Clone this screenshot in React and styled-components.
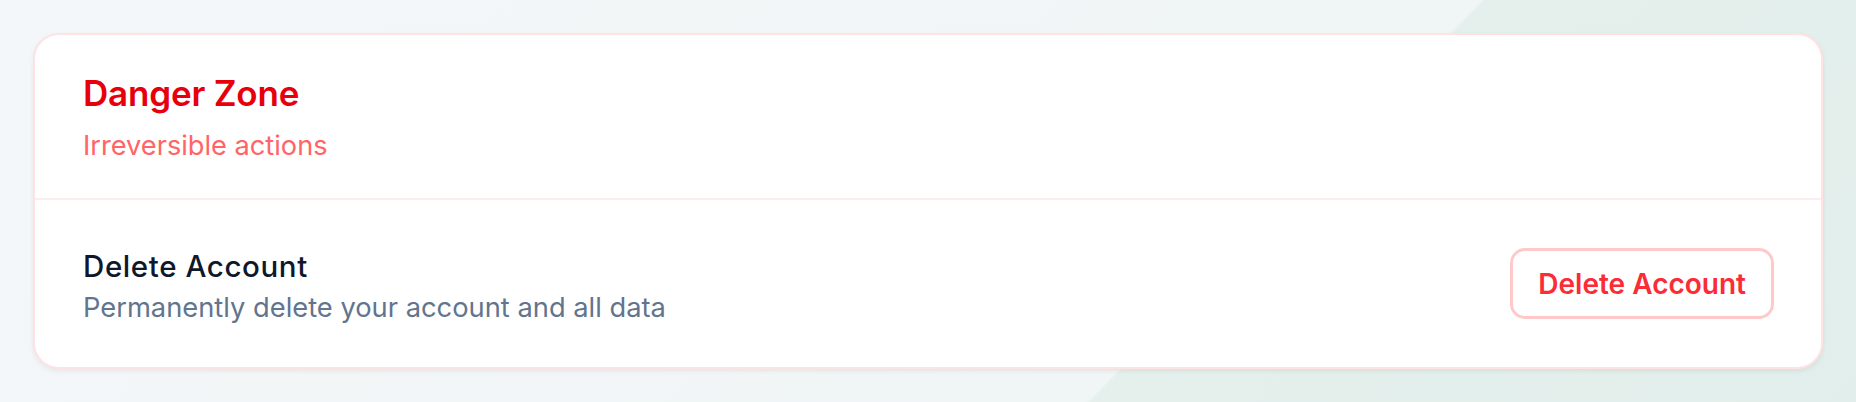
import React from "react";
import styled, { createGlobalStyle } from "styled-components";

const GlobalStyle = createGlobalStyle`
  html, body {
    margin: 0;
    padding: 0;
  }
  body {
    font-family: Inter, "Noto Sans", "Liberation Sans", sans-serif;
    background-color: #eef3f3;
    background-image:
      linear-gradient(134.5deg, #f4f7f9 0%, #f0f5f6 65.8%, #e5f0ed 66%, #e2eeeb 100%);
    -webkit-font-smoothing: antialiased;
  }
  * { box-sizing: border-box; }
`;

const Page = styled.main`
  min-height: 402px;
  padding: 33px;
`;

const Card = styled.section`
  background: #ffffff;
  border: 2px solid #ffe2e2;
  border-radius: 26px;
  box-shadow: 0 2px 5px rgba(15, 23, 43, 0.07);
  overflow: hidden;
`;

const Header = styled.header`
  padding: 36px 48px 0;
  height: 165px;
  border-bottom: 2px solid #ffeded;
`;

const Title = styled.h2`
  margin: 0;
  font-size: 35px;
  line-height: 44px;
  font-weight: 600;
  color: #e7000b;
  letter-spacing: -0.2px;
`;

const Subtitle = styled.p`
  margin: 13px 0 0;
  font-size: 27.2px;
  line-height: 36px;
  font-weight: 400;
  color: #ff6467;
`;

const Row = styled.div`
  display: flex;
  align-items: center;
  justify-content: space-between;
  height: 167px;
  padding: 0 47px 0 48px;
`;

const Info = styled.div`
  display: flex;
  flex-direction: column;
  gap: 6px;
  padding-top: 6px;
`;

const Label = styled.h3`
  margin: 0;
  font-size: 29.5px;
  line-height: 36px;
  font-weight: 500;
  letter-spacing: 0.6px;
  color: #0f172b;
`;

const Description = styled.p`
  margin: 0;
  font-size: 27.3px;
  line-height: 36px;
  font-weight: 400;
  color: #62748e;
`;

const DangerButton = styled.button`
  font-family: inherit;
  height: 71px;
  padding: 0 25px;
  background: #ffffff;
  border: 3px solid #ffc9c9;
  border-radius: 15px;
  color: #fb2c36;
  font-size: 28px;
  font-weight: 600;
  cursor: pointer;
`;

export default function App() {
  return (
    <>
      <GlobalStyle />
      <Page>
        <Card>
          <Header>
            <Title>Danger Zone</Title>
            <Subtitle>Irreversible actions</Subtitle>
          </Header>
          <Row>
            <Info>
              <Label>Delete Account</Label>
              <Description>Permanently delete your account and all data</Description>
            </Info>
            <DangerButton>Delete Account</DangerButton>
          </Row>
        </Card>
      </Page>
    </>
  );
}
